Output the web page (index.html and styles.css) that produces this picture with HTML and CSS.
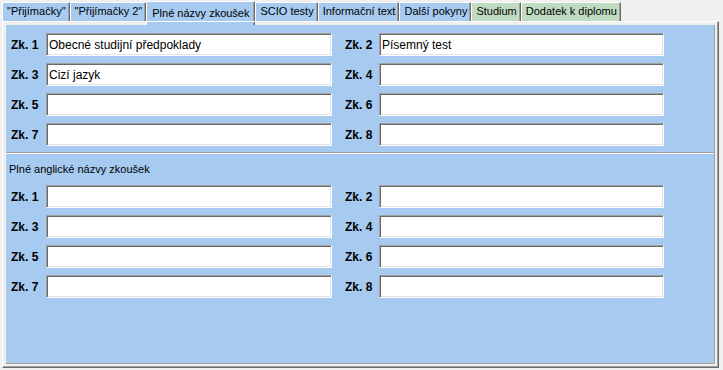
FILE: index.html
```html
<!DOCTYPE html>
<html lang="cs">
<head>
  <meta charset="UTF-8">
  <title>Plné názvy zkoušek</title>
  <link rel="stylesheet" href="styles.css">
</head>
<body>
  <div class="window">
    <!-- záložky -->
    <ul class="tabs">
      <li class="tab">"Přijímačky"</li>
      <li class="tab">"Přijímačky 2"</li>
      <li class="tab active">Plné názvy zkoušek</li>
      <li class="tab">SCIO testy</li>
      <li class="tab">Informační text</li>
      <li class="tab">Další pokyny</li>
      <li class="tab green">Studium</li>
      <li class="tab green">Dodatek k diplomu</li>
    </ul>

    <!-- obsah záložky -->
    <div class="page">
      <div class="sheet">
        <section class="group group-cz">
          <div class="fields">
            <label class="lbl">Zk. 1</label><input class="field" type="text" value="Obecné studijní předpoklady">
            <label class="lbl lbl-right">Zk. 2</label><input class="field" type="text" value="Písemný test">
            <label class="lbl">Zk. 3</label><input class="field" type="text" value="Cizí jazyk">
            <label class="lbl lbl-right">Zk. 4</label><input class="field" type="text" value="">
            <label class="lbl">Zk. 5</label><input class="field" type="text" value="">
            <label class="lbl lbl-right">Zk. 6</label><input class="field" type="text" value="">
            <label class="lbl">Zk. 7</label><input class="field" type="text" value="">
            <label class="lbl lbl-right">Zk. 8</label><input class="field" type="text" value="">
          </div>
        </section>

        <section class="group group-en">
          <p class="group-title">Plné anglické názvy zkoušek</p>
          <div class="fields">
            <label class="lbl">Zk. 1</label><input class="field" type="text" value="">
            <label class="lbl lbl-right">Zk. 2</label><input class="field" type="text" value="">
            <label class="lbl">Zk. 3</label><input class="field" type="text" value="">
            <label class="lbl lbl-right">Zk. 4</label><input class="field" type="text" value="">
            <label class="lbl">Zk. 5</label><input class="field" type="text" value="">
            <label class="lbl lbl-right">Zk. 6</label><input class="field" type="text" value="">
            <label class="lbl">Zk. 7</label><input class="field" type="text" value="">
            <label class="lbl lbl-right">Zk. 8</label><input class="field" type="text" value="">
          </div>
        </section>
      </div>
    </div>
  </div>
</body>
</html>
```

FILE: styles.css
```css
/* základ */
body {
  margin: 0;
  background: #f0f0f0;
  font-family: "Liberation Sans", Arial, sans-serif;
  color: #000;
}
.window {
  display: flex;
  flex-direction: column;
  height: 370px;
  box-sizing: border-box;
  padding: 0 4px 2px 2px;
}

/* záložky */
.tabs {
  display: flex;
  align-items: flex-end;
  list-style: none;
  margin: 0;
  padding: 0;
  height: 21px;
}
.tab {
  height: 18px;
  line-height: 17px;
  padding: 0 3px 0 4px;
  font-size: 11px;
  background: #a6caf0;
  border-top: 1px solid #fff;
  border-left: 1px solid #fff;
  border-right: 1px solid #696969;
  box-shadow: inset -1px 0 #a0a0a0;
  white-space: nowrap;
  cursor: pointer;
}
.tab.green { background: #c0dcc0; }
.tab.active {
  height: 23px;
  line-height: 23px;
  margin-bottom: -4px;
  padding: 0 5px;
  font-size: 11px;
}

/* stránka */
.page {
  flex: 1;
  display: flex;
  border-top: 1px solid #fff;
  border-left: 1px solid #fff;
  border-right: 1px solid #696969;
  border-bottom: 1px solid #696969;
  box-shadow: inset -1px -1px #a0a0a0;
  padding: 3px;
}
.sheet {
  flex: 1;
  background: #a6caf0;
  border-right: 1px solid #a0a0a0;
  border-bottom: 1px solid #a0a0a0;
}

/* skupiny polí */
.group { padding: 0 0 0 5px; }
.group-cz {
  padding-top: 8px;
  padding-bottom: 6px;
  border-bottom: 1px solid #a0a0a0;
}
.group-en {
  border-top: 1px solid #fff;
  padding-top: 9px;
}
.group-title {
  margin: 0 0 9px -2px;
  font-size: 11px;
  line-height: 13px;
}

.fields {
  display: grid;
  grid-template-columns: 35px 286px 47px 285px;
  grid-auto-rows: 23px;
  row-gap: 7px;
  align-items: center;
}
.lbl {
  font-size: 12px;
  font-weight: bold;
}
.lbl-right { padding-left: 13px; }

.field {
  box-sizing: border-box;
  width: 100%;
  height: 23px;
  margin: 0;
  padding: 0 2px;
  font-family: "Liberation Sans", Arial, sans-serif;
  font-size: 12px;
  color: #000;
  background: #fff;
  border-style: solid;
  border-width: 1px;
  border-color: #a0a0a0 #fff #fff #a0a0a0;
  box-shadow: inset 1px 1px #696969, inset -1px -1px #e3e3e3;
  outline: none;
}
```
